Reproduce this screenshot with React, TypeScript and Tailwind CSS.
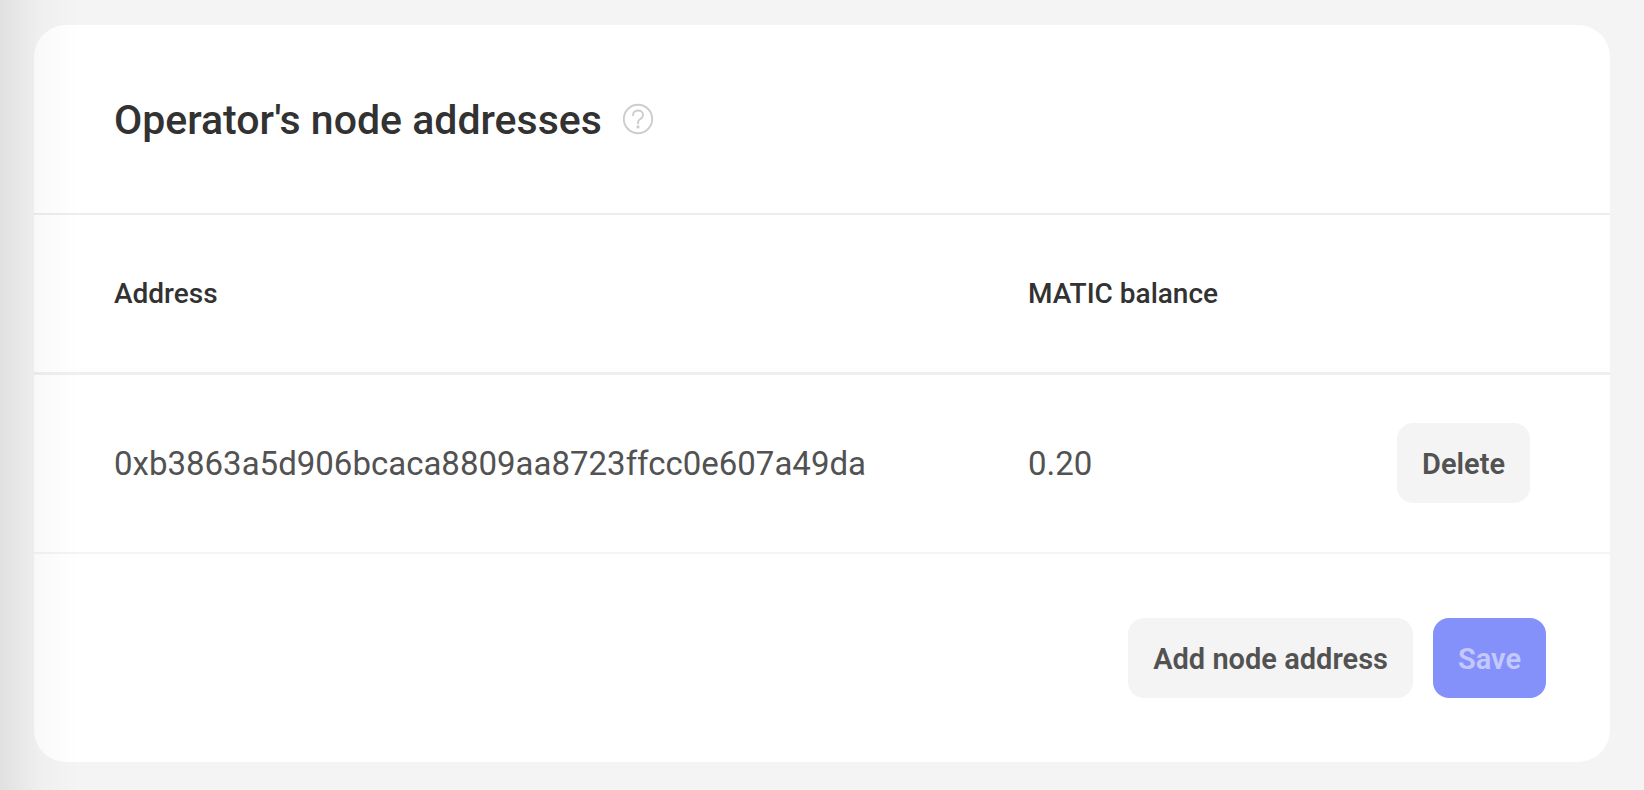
import type { ButtonHTMLAttributes } from 'react';

type NodeAddress = { address: string; balance: string };

const nodes: NodeAddress[] = [
  { address: '0xb3863a5d906bcaca8809aa8723ffcc0e607a49da', balance: '0.20' },
];

type ButtonProps = ButtonHTMLAttributes<HTMLButtonElement> & { primary?: boolean };

function Button({ primary = false, children, ...rest }: ButtonProps) {
  const tone = primary ? 'bg-[#8591fb] text-[#c4c9fd]' : 'bg-[#f4f4f4] text-[#525252]';
  return (
    <button
      type="button"
      className={`h-20 rounded-2xl px-[25px] pt-0.5 text-[29px] leading-9 font-semibold whitespace-nowrap ${tone}`}
      {...rest}
    >
      {children}
    </button>
  );
}

function HelpIcon() {
  return (
    <svg width="32" height="32" viewBox="0 0 32 32" fill="none" stroke="#cdcdcd" aria-hidden="true">
      <circle cx="16" cy="16" r="14.2" strokeWidth="1.9" />
      <path
        d="M11 12.2C11 9.3 13.2 7.5 16 7.5s5 1.8 5 4.4c0 2.2-1.3 3.2-2.8 4.2-1.4 1-2.2 1.7-2.2 3.4v.9"
        strokeWidth="1.9"
        strokeLinecap="round"
      />
      <circle cx="16" cy="23.9" r="1.6" fill="#cdcdcd" stroke="none" />
    </svg>
  );
}

export default function App() {
  return (
    <main className="relative min-h-screen bg-[#f4f4f4] pt-[25px] pr-[34px] pb-[27px] pl-[34px] font-['Roboto','Liberation_Sans',sans-serif]">
      <section className="overflow-hidden rounded-[32px] bg-white">
        <header className="flex h-[190px] items-center gap-5 border-b-2 border-[#ededed] px-20">
          <h1 className="pt-0.5 text-[41px] leading-[52px] font-medium text-[#323232]">
            Operator's node addresses
          </h1>
          <button type="button" aria-label="Help">
            <HelpIcon />
          </button>
        </header>

        <table className="w-full text-left">
          <thead>
            <tr className="h-[158px] border-b-3 border-[#efefef] text-[28px] leading-9 text-[#323232]">
              <th scope="col" className="pt-0.5 pl-20 font-medium">Address</th>
              <th scope="col" className="pt-0.5 font-medium">MATIC balance</th>
              <td />
            </tr>
          </thead>
          <tbody>
            {nodes.map((node) => (
              <tr key={node.address} className="h-[180px] border-b-2 border-[#f4f4f4] text-[33px] leading-10 text-[#525252]">
                <td className="w-[994px] pt-0.5 pl-20">{node.address}</td>
                <td className="pt-0.5">{node.balance}</td>
                <td className="pr-20 text-right">
                  <Button>Delete</Button>
                </td>
              </tr>
            ))}
          </tbody>
        </table>

        <footer className="flex justify-end gap-5 p-16">
          <Button>Add node address</Button>
          <Button primary disabled>Save</Button>
        </footer>
      </section>
      <div className="pointer-events-none absolute inset-y-0 left-0 w-20 bg-linear-to-r from-black/8 via-black/2 to-transparent" />
    </main>
  );
}
